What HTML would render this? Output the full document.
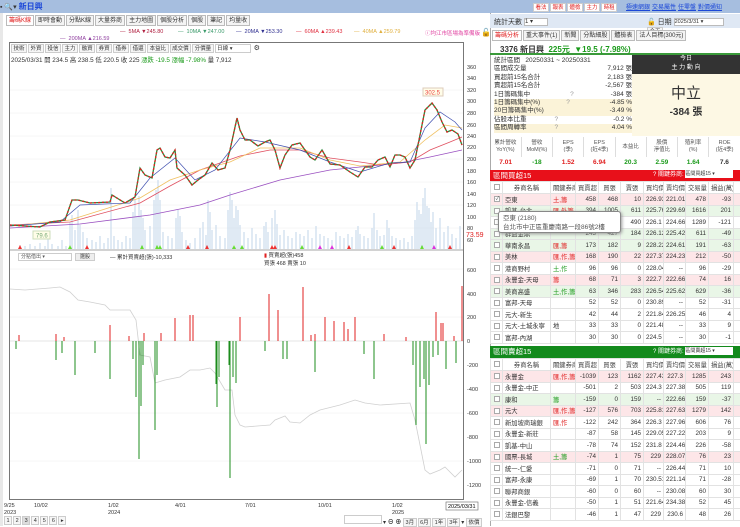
<!DOCTYPE html>
<html><head><meta charset="utf-8">
<style>
*{box-sizing:border-box;margin:0;padding:0}
body{width:740px;height:526px;overflow:hidden;background:#fff;font-family:"Liberation Sans","Noto Sans CJK TC",sans-serif;font-size:7px;color:#333;position:relative}
.abs{position:absolute}
.top{left:0;top:0;width:740px;height:13px;background:#a6bedf}
.tab{display:inline-block;border:1px solid #bbb;background:#f4f4f4;padding:0 2px;height:11px;line-height:10px;font-size:6px;margin-right:1px}
.btn{display:inline-block;border:1px solid #ccc;background:#f6f6f6;padding:0 1.5px;height:9px;line-height:8px;font-size:5.5px;margin-right:1px}
table{border-collapse:collapse;table-layout:fixed}
.t td{height:11.5px;border:1px solid #e2e2e2;font-size:6.3px;text-align:right;padding:0 2px;white-space:nowrap;overflow:hidden}
.t td.l{text-align:left}
.t tr.h td{text-align:center;background:#fff;height:12px;color:#444}
.t tr.p td{background:#fde6e8}
.t tr.g td{background:#e9f6e7}
.cb{display:inline-block;width:6px;height:6px;border:1px solid #aaa;background:#fff;vertical-align:middle}
.r{color:#e02020}.gr{color:#1a9a1a}
</style></head><body>
<div class="abs top"></div>
<div class="abs" style="left:0;top:1px;font-size:7px">▪ 🔍▾ <span style="color:#1b47d8;font-size:8px;font-weight:bold">新日興</span></div>
<div class="abs" style="left:533px;top:2px">
<span class="btn r" style="background:#fff">看法</span><span class="btn r" style="background:#fff">報表</span><span class="btn r" style="background:#fff">體檢</span><span class="btn r" style="background:#fff">主力</span><span class="btn r" style="background:#fff">時租</span>
<span style="color:#1b47d8;text-decoration:underline;font-size:6px;margin-left:6px">極速網銀</span> <span style="color:#1b47d8;text-decoration:underline;font-size:6px">交易屬性</span> <span style="color:#1b47d8;text-decoration:underline;font-size:6px">任零盤</span> <span style="color:#1b47d8;text-decoration:underline;font-size:6px">對價通知</span></div>

<!-- left tabs -->
<div class="abs" style="left:6px;top:15px"><span class="tab r" style="background:#fff">籌碼K線</span><span class="tab">即時會動</span><span class="tab">分點K線</span><span class="tab">大量券商</span><span class="tab">主力地圖</span><span class="tab">個股分析</span><span class="tab">個股</span><span class="tab">筆記</span><span class="tab">均量收</span></div>
<div class="abs" style="left:0;top:13px;width:3px;height:513px;background:#e8e8e8"></div>
<div class="abs" style="left:0;top:29px;width:740px;font-size:5.5px">
<span class="abs" style="left:120px;color:#b02040">— &nbsp;5MA ▼245.80</span>
<span class="abs" style="left:178px;color:#3a9a6a">— &nbsp;10MA ▼247.00</span>
<span class="abs" style="left:236px;color:#303090">— &nbsp;20MA ▼253.30</span>
<span class="abs" style="left:296px;color:#e03040">— &nbsp;60MA ▲239.43</span>
<span class="abs" style="left:354px;color:#e0b040">— &nbsp;40MA ▲259.79</span>
<span class="abs" style="left:425px;color:#e040a0">ⓘ均江市區場為準備版</span>
<span class="abs" style="left:60px;top:7px;color:#9040a0">— &nbsp;200MA ▲216.59</span></div>
<div class="abs" style="left:481px;top:28px;font-size:8px">🔓</div>

<!-- chart box -->
<div class="abs" style="left:9px;top:42px;width:455px;height:458px;border:1px solid #777"></div>
<div class="abs" style="left:11px;top:44px"><span class="btn">技術</span><span class="btn">外資</span><span class="btn">投信</span><span class="btn">主力</span><span class="btn">融資</span><span class="btn">券資</span><span class="btn">借券</span><span class="btn">借還</span><span class="btn">本益比</span><span class="btn">成交價</span><span class="btn">分價量</span><span class="btn" style="width:36px;background:#fff">日線 ▾</span> <span style="font-size:7px">⚙</span></div>
<div class="abs" style="left:11px;top:55px;font-size:6.3px">2025/03/31 開 234.5 高 238.5 低 220.5 收 225 <span class="gr">漲跌 -19.5 漲幅 -7.98%</span> 量 7,912</div>

<svg class="abs" style="left:0;top:0" width="740" height="526">
<g font-size="5.5" fill="#333" font-family="Liberation Sans">
<text x="467" y="69">360</text><text x="467" y="80">340</text><text x="467" y="92">320</text><text x="467" y="103">300</text><text x="467" y="115">280</text><text x="467" y="127">260</text><text x="467" y="138">240</text><text x="467" y="149">220</text><text x="467" y="161">200</text><text x="467" y="173">180</text><text x="467" y="184">160</text><text x="467" y="196">140</text><text x="467" y="207">120</text><text x="467" y="219">100</text><text x="467" y="230">80</text><text x="467" y="242">60</text>
<text x="466" y="237" fill="#e02020" font-size="7">73.59</text>
<text x="467" y="272">600</text><text x="467" y="296">400</text><text x="467" y="319">200</text><text x="467" y="343">0</text><text x="467" y="367">-200</text><text x="467" y="391">-400</text><text x="467" y="415">-600</text><text x="467" y="439">-800</text><text x="467" y="463">-1000</text><text x="467" y="487">-1200</text>
</g>
<g stroke="#eee" stroke-width="0.5"><line x1="10" y1="90" x2="463" y2="90"/><line x1="10" y1="113" x2="463" y2="113"/><line x1="10" y1="136" x2="463" y2="136"/><line x1="10" y1="159" x2="463" y2="159"/><line x1="10" y1="182" x2="463" y2="182"/><line x1="10" y1="205" x2="463" y2="205"/><line x1="10" y1="228" x2="463" y2="228"/>
<line x1="10" y1="269" x2="463" y2="269"/><line x1="10" y1="317" x2="463" y2="317"/><line x1="10" y1="413" x2="463" y2="413"/><line x1="10" y1="461" x2="463" y2="461"/></g>
<!-- volume -->
<path stroke="#c2d5ea" stroke-width="1" d="M20 249V245M25 249V246M30 249V244M35 249V246M40 249V243M45 249V246M48 249V238M52 249V244M58 249V246M62 249V240M66 249V246M70 249V222M72 249V215M75 249V230M78 249V210M80 249V225M83 249V232M87 249V238M92 249V240M96 249V242M100 249V236M104 249V243M108 249V238M111 249V188M114 249V236M118 249V240M122 249V242M126 249V236M130 249V238M133 249V212M135 249V200M137 249V216M139 249V196M141 249V210M143 249V218M145 249V230M150 249V226M154 249V200M156 249V190M158 249V180M160 249V200M163 249V232M168 249V236M172 249V238M176 249V218M178 249V210M180 249V216M182 249V232M186 249V240M190 249V243M195 249V238M200 249V228M203 249V222M206 249V235M208 249V200M210 249V212M212 249V230M216 249V225M220 249V236M225 249V238M228 249V210M230 249V192M232 249V200M234 249V218M236 249V206M238 249V210M240 249V225M244 249V232M248 249V238M252 249V228M256 249V234M260 249V238M264 249V226M266 249V222M268 249V232M272 249V218M275 249V210M277 249V224M280 249V235M284 249V230M288 249V236M292 249V238M296 249V232M300 249V234M304 249V236M308 249V230M312 249V238M316 249V226M320 249V234M324 249V236M328 249V238M332 249V240M336 249V232M340 249V236M344 249V238M348 249V234M352 249V237M356 249V230M358 249V226M360 249V234M364 249V236M368 249V238M372 249V228M374 249V213M377 249V230M380 249V236M384 249V235M387 249V220M389 249V228M392 249V236M396 249V238M400 249V240M404 249V238M408 249V242M412 249V236M415 249V220M417 249V202M419 249V210M421 249V214M423 249V198M425 249V188M427 249V206M429 249V208M431 249V222M433 249V212M436 249V228M440 249V218M444 249V232M448 249V226M452 249V234M456 249V238M460 249V226"/>
<g fill="#6d3" ><path d="M68 249l2-4 2 4zM140 249l2-4 2 4zM155 249l2-4 2 4zM158 249l2-4 2 4zM232 249l2-4 2 4zM240 249l2-4 2 4zM380 249l2-4 2 4zM420 249l2-4 2 4zM300 249l2-4 2 4z"/></g>
<g fill="#e33"><path d="M18 249l2-4 2 4zM85 249l2-4 2 4zM186 249l2-4 2 4zM205 249l2-4 2 4zM270 249l2-4 2 4zM273 249l2-4 2 4zM347 249l2-4 2 4zM392 249l2-4 2 4zM448 249l2-4 2 4z"/></g>
<g fill="#d3d"><path d="M318 249l2-4 2 4zM330 249l2-4 2 4zM432 249l2-4 2 4z"/></g>
<line x1="10" y1="250" x2="463" y2="250" stroke="#888" stroke-width="0.7"/>
<!-- MAs -->
<polyline fill="none" stroke="#9a50c0" stroke-width="0.8" points="10,228 80,224 150,215 200,205 230,195 280,180 330,170 360,167 400,163 430,157 462,150"/>
<polyline fill="none" stroke="#e05060" stroke-width="0.8" points="10,225 70,222 140,203 170,186 200,170 240,156 270,150 300,150 330,158 360,162 380,165 410,162 430,150 450,142 462,137"/>
<polyline fill="none" stroke="#f0c060" stroke-width="0.8" points="10,226 70,220 140,198 170,180 200,170 230,162 260,148 300,148 330,160 360,166 400,162 425,140 445,125 462,128"/>
<polyline fill="none" stroke="#4050b0" stroke-width="0.7" points="10,226 60,222 80,205 130,203 150,178 175,158 195,180 215,170 240,138 265,142 300,150 330,162 360,172 390,163 410,162 425,128 440,112 455,122 462,130"/>
<polyline fill="none" stroke="#2a8a3a" stroke-width="1.3" points="10,225 40,227 50,222 65,220 72,200 78,200 90,203 110,202 112,195 125,203 135,197 140,168 145,175 152,178 157,150 160,148 165,157 170,158 175,150 177,168 185,175 192,185 198,180 205,175 212,163 218,170 225,168 230,150 237,118 240,130 245,140 250,140 258,146 265,142 270,140 275,150 280,168 285,155 292,145 300,143 305,150 310,157 315,160 322,150 330,164 340,165 350,172 358,177 365,167 372,167 378,160 385,157 390,167 395,155 400,155 405,157 410,168 415,160 418,145 425,110 432,103 437,110 442,122 447,132 452,130 458,134 462,145"/>
<polyline fill="none" stroke="#e02020" stroke-width="1.3" stroke-dasharray="2 2" points="10,225 40,227 50,222 65,220 72,200 78,200 90,203 110,202 112,195 125,203 135,197 140,168 145,175 152,178 157,150 160,148 165,157 170,158 175,150 177,168 185,175 192,185 198,180 205,175 212,163 218,170 225,168 230,150 237,118 240,130 245,140 250,140 258,146 265,142 270,140 275,150 280,168 285,155 292,145 300,143 305,150 310,157 315,160 322,150 330,164 340,165 350,172 358,177 365,167 372,167 378,160 385,157 390,167 395,155 400,155 405,157 410,168 415,160 418,145 425,110 432,103 437,110 442,122 447,132 452,130 458,134 462,145"/>
<rect x="33" y="231" width="17" height="8" fill="#fffde8" stroke="#cdb"/><text x="36" y="237.5" font-size="6" fill="#7a7">79.6</text>
<rect x="423" y="88" width="20" height="8" fill="#fffde8" stroke="#dcb"/><text x="425" y="94.5" font-size="6" fill="#e44">302.5</text>
<!-- lower -->
<line x1="10" y1="341" x2="463" y2="341" stroke="#ccc" stroke-width="0.5"/>
<polyline fill="none" stroke="#d0d0d0" stroke-width="0.8" points="10,289 25,290 50,288 60,287 70,292 78,300 90,302 105,305 110,310 130,310 136,320 140,355 150,357 155,383 165,380 180,377 190,370 200,370 210,368 215,373 225,390 232,390 235,415 240,425 245,427 270,425 275,420 285,416 290,422 300,423 310,415 320,410 340,405 355,400 365,403 380,405 410,403 415,420 425,470 430,474 440,470 445,467 455,477 462,470"/>
<path stroke="#e02020" stroke-width="1" d="M19 341V335M56 341V334M64 341V337M110 341V325M129 341V336M144 341V333M161 341V333M175 341V318M190 341V315M193 341V315M240 341V317M269 341V294M278 341V310M303 341V287M311 341V335M315 341V334M325 341V317M334 341V321M344 341V322M348 341V329M355 341V317M384 341V334M406 341V337M436 341V312M441 341V323M443 341V323M454 341V336M462 341V286"/>
<path stroke="#1c8c1c" stroke-width="1" d="M16 341V349M56 341V360M62 341V353M75 341V375M95 341V353M110 341V379M133 341V359M136 341V397M139 341V459M141 341V406M143 341V365M155 341V430M157 341V375M216 341V384M217 341V407M219 341V377M229 341V365M230 341V478M233 341V377M236 341V383M265 341V351M283 341V359M287 341V359M315 341V372M364 341V354M374 341V379M413 341V365M416 341V425M420 341V387M424 341V379M426 341V444M429 341V385M433 341V357M438 341V355M446 341V369M456 341V363"/>
<g font-size="5.5" fill="#333">
<text x="4" y="507">9/25</text><text x="4" y="514">2023</text><text x="34" y="507">10/02</text><text x="108" y="507">1/02</text><text x="108" y="514">2024</text><text x="175" y="507">4/01</text><text x="245" y="507">7/01</text><text x="318" y="507">10/01</text><text x="392" y="507">1/02</text><text x="392" y="514">2025</text>
</g>
<rect x="446" y="502" width="32" height="8" fill="#fff" stroke="#666" stroke-width="0.6"/><text x="448" y="508" font-size="5.5">2025/03/31</text>
</svg>
<div class="abs" style="left:18px;top:253px;width:54px;height:8px;border:1px solid #ccc;font-size:5px;line-height:7px;padding-left:2px;color:#555">分點借出 ▾</div>
<div class="abs" style="left:75px;top:253px;width:20px;height:8px;border:1px solid #ccc;background:#eee;font-size:5px;line-height:7px;text-align:center">選股</div>
<div class="abs" style="left:110px;top:253px;font-size:5.5px">— 累計買賣超(張)-10,333</div>
<div class="abs" style="left:264px;top:252px;font-size:5.5px;line-height:8px"><span class="r">▮</span> 買賣超(張)458<br>買張 468 賣張 10</div>
<div class="abs" style="left:4px;top:516px;font-size:6px"><span class="btn">1</span><span class="btn">2</span><span class="btn" style="background:#ddd">3</span><span class="btn">4</span><span class="btn">5</span><span class="btn">6</span><span class="btn">▸</span></div>
<div class="abs" style="left:344px;top:515px;font-size:6px"><span class="btn" style="width:38px;background:#fff"> </span>▾ <b>⊖ ⊕</b> <span class="btn">3月</span><span class="btn">6月</span><span class="btn">1年</span><span class="btn">3年</span>▾ <span class="btn">依價</span></div>

<!-- right panel -->
<div class="abs" style="left:490px;top:13px;width:250px;height:513px;border-left:1px solid #aaa"></div>
<div class="abs" style="left:490px;top:14px;width:250px;height:14px;background:#dfe8f4"></div>
<div class="abs" style="left:494px;top:17px;font-size:7px">統計天數 <span style="display:inline-block;width:24px;height:8px;border:1px solid #bbb;background:#fff;font-size:6px;line-height:7px;vertical-align:middle">1 ▾</span></div>
<div class="abs" style="left:647px;top:17px;font-size:7px">🔓 日期 <span style="display:inline-block;width:50px;height:8px;border:1px solid #bbb;background:#fff;font-size:5.5px;line-height:7px;vertical-align:middle">2025/3/31 ▾</span> <span class="btn">今天</span></div>
<div class="abs" style="left:492px;top:30px"><span class="tab r" style="background:#fff">籌碼分析</span><span class="tab">重大事件(1)</span><span class="tab">新聞</span><span class="tab">分點細股</span><span class="tab">體檢表</span><span class="tab">法人目標(300元)</span></div>
<div class="abs" style="left:490px;top:42px;width:250px;height:13px;border-bottom:2px solid #3a9a3a"></div>
<div class="abs" style="left:500px;top:44px;font-size:8px;font-weight:bold">3376 新日興 &nbsp;<span class="gr">225元 &nbsp;▼19.5 (-7.98%)</span></div>
<div class="abs" style="left:494px;top:57px;width:138px;font-size:6.5px;line-height:8.4px">
<div>統計區間 &nbsp; 20250331 ~ 20250331</div>
<div>區間成交量<span style="float:right">7,912 張</span></div>
<div>買超前15名合計<span style="float:right">2,183 張</span></div>
<div>賣超前15名合計<span style="float:right">-2,567 張</span></div>
<div>1日籌碼集中<span style="margin-left:40px;color:#999">?</span><span style="float:right">-384 張</span></div>
<div style="background:#fbf3d8">1日籌碼集中(%)<span style="margin-left:26px;color:#999">?</span><span style="float:right">-4.85 %</span></div>
<div style="background:#fbf3d8">20日籌碼集中(%)<span style="float:right">-3.49 %</span></div>
<div>佔股本比重<span style="margin-left:28px;color:#999">?</span><span style="float:right">-0.2 %</span></div>
<div style="background:#fbf3d8">區間周轉率<span style="margin-left:28px;color:#999">?</span><span style="float:right">4.04 %</span></div>
</div>
<div class="abs" style="left:632px;top:55px;width:108px;height:19px;background:#333;color:#fff;text-align:center;font-size:6px;line-height:9px">今日<br>主 力 動 向</div>
<div class="abs" style="left:632px;top:74px;width:108px;height:62px;background:#fdf8e4;text-align:center"><div style="font-size:15px;margin-top:8px;color:#333">中立</div><div style="font-size:10px;font-weight:bold">-384 張</div></div>
<table class="abs" style="left:490px;top:137px;width:250px;font-size:5.5px;text-align:center"><tr style="height:20px;color:#555;line-height:7px">
<td style="border-right:1px solid #ddd">累計營收<br>YoY(%)</td><td style="border-right:1px solid #ddd">營收<br>MoM(%)</td><td style="border-right:1px solid #ddd">EPS<br>(季)</td><td style="border-right:1px solid #ddd">EPS<br>(近4季)</td><td style="border-right:1px solid #ddd">本益比</td><td style="border-right:1px solid #ddd">股價<br>淨值比</td><td style="border-right:1px solid #ddd">殖利率<br>(%)</td><td>ROE<br>(近4季)</td></tr>
<tr style="height:11px;font-weight:bold;font-size:6.5px"><td class="r">7.01</td><td class="gr">-18</td><td class="r">1.52</td><td class="r">6.94</td><td class="gr">20.3</td><td class="gr">2.59</td><td class="gr">1.64</td><td>7.6</td></tr></table>
<div class="abs" style="left:490px;top:170px;width:250px;height:11px;background:#e8101a;color:#fff;font-size:7.5px;line-height:11px;padding-left:3px">區間買超15<span style="position:absolute;left:163px;font-size:6px">? 關鍵券商: <span style="display:inline-block;width:48px;height:8px;background:#fff;color:#333;font-size:5px;line-height:8px;vertical-align:middle">區間買超15 ▾</span></span></div>
<table class="abs t" style="left:490px;top:181px;width:250px">
<colgroup><col style="width:12px"><col style="width:48px"><col style="width:25px"><col style="width:23px"><col style="width:22px"><col style="width:23px"><col style="width:20px"><col style="width:22px"><col style="width:23px"><col style="width:25px"><col style="width:7px"></colgroup>
<tr class="h"><td><span class="cb"></span></td><td>券商名稱</td><td>關鍵券商</td><td>買賣超</td><td>買張</td><td>賣張</td><td>買均價</td><td>賣均價</td><td>交易量</td><td>損益(萬)</td><td></td></tr>
<tr class="p"><td><span class="cb" style="font-size:5px;line-height:4px">✓</span></td><td class="l">亞東</td><td class="l r">土,籌</td><td>458</td><td>468</td><td>10</td><td>226.93</td><td>221.01</td><td>478</td><td>-93</td><td></td></tr>
<tr class="g"><td><span class="cb"></span></td><td class="l">凱基-台北</td><td class="l r">匯,外籌</td><td>394</td><td>1005</td><td>611</td><td>225.76</td><td>229.69</td><td>1616</td><td>201</td><td></td></tr>
<tr><td><span class="cb"></span></td><td class="l">元大</td><td></td><td>309</td><td>799</td><td>490</td><td>226.1</td><td>224.66</td><td>1289</td><td>-121</td><td></td></tr>
<tr class="g"><td><span class="cb"></span></td><td class="l">群益金鼎</td><td></td><td>243</td><td>427</td><td>184</td><td>226.12</td><td>225.42</td><td>611</td><td>-49</td><td></td></tr>
<tr class="g"><td><span class="cb"></span></td><td class="l">華南永昌</td><td class="l r">匯,籌</td><td>173</td><td>182</td><td>9</td><td>228.22</td><td>224.61</td><td>191</td><td>-63</td><td></td></tr>
<tr class="p"><td><span class="cb"></span></td><td class="l">美林</td><td class="l r">匯,作,籌</td><td>168</td><td>190</td><td>22</td><td>227.37</td><td>224.23</td><td>212</td><td>-50</td><td></td></tr>
<tr><td><span class="cb"></span></td><td class="l">港商野村</td><td class="l gr">土,作</td><td>96</td><td>96</td><td>0</td><td>228.04</td><td>--</td><td>96</td><td>-29</td><td></td></tr>
<tr class="p"><td><span class="cb"></span></td><td class="l">永豐金-天母</td><td class="l r">籌</td><td>68</td><td>71</td><td>3</td><td>222.7</td><td>222.66</td><td>74</td><td>16</td><td></td></tr>
<tr class="g"><td><span class="cb"></span></td><td class="l">美商高盛</td><td class="l gr">土,作,籌</td><td>63</td><td>346</td><td>283</td><td>226.54</td><td>225.62</td><td>629</td><td>-36</td><td></td></tr>
<tr><td><span class="cb"></span></td><td class="l">富邦-天母</td><td></td><td>52</td><td>52</td><td>0</td><td>230.89</td><td>--</td><td>52</td><td>-31</td><td></td></tr>
<tr><td><span class="cb"></span></td><td class="l">元大-新生</td><td></td><td>42</td><td>44</td><td>2</td><td>221.84</td><td>226.25</td><td>46</td><td>4</td><td></td></tr>
<tr><td><span class="cb"></span></td><td class="l">元大-土城永寧</td><td class="l">地</td><td>33</td><td>33</td><td>0</td><td>221.48</td><td>--</td><td>33</td><td>9</td><td></td></tr>
<tr><td><span class="cb"></span></td><td class="l">富邦-內湖</td><td></td><td>30</td><td>30</td><td>0</td><td>224.5</td><td>--</td><td>30</td><td>-1</td><td></td></tr>
</table>
<div class="abs" style="left:498px;top:211px;width:123px;height:22px;background:#fff;border:1px solid #888;border-radius:3px;box-shadow:1px 1px 3px #999;font-size:6.5px;line-height:9px;padding:2px 4px;color:#555">亞東 (2180)<br>台北市中正區重慶南路一段86號2樓</div>
<div class="abs" style="left:490px;top:346px;width:250px;height:12px;background:#138a1c;color:#fff;font-size:7.5px;line-height:12px;padding-left:3px">區間賣超15<span style="position:absolute;left:163px;font-size:6px">? 關鍵券商: <span style="display:inline-block;width:48px;height:8px;background:#fff;color:#333;font-size:5px;line-height:8px;vertical-align:middle">區間賣超15 ▾</span></span></div>
<table class="abs t" style="left:490px;top:358px;width:250px">
<colgroup><col style="width:12px"><col style="width:48px"><col style="width:25px"><col style="width:23px"><col style="width:22px"><col style="width:23px"><col style="width:20px"><col style="width:22px"><col style="width:23px"><col style="width:25px"><col style="width:7px"></colgroup>
<tr class="h"><td><span class="cb"></span></td><td>券商名稱</td><td>關鍵券商</td><td>買賣超</td><td>買張</td><td>賣張</td><td>買均價</td><td>賣均價</td><td>交易量</td><td>損益(萬)</td><td></td></tr>
<tr class="p"><td><span class="cb"></span></td><td class="l">永豐金</td><td class="l r">匯,作,籌</td><td>-1039</td><td>123</td><td>1162</td><td>227.43</td><td>227.3</td><td>1285</td><td>243</td><td></td></tr>
<tr><td><span class="cb"></span></td><td class="l">永豐金-中正</td><td></td><td>-501</td><td>2</td><td>503</td><td>224.3</td><td>227.38</td><td>505</td><td>119</td><td></td></tr>
<tr class="g"><td><span class="cb"></span></td><td class="l">康和</td><td class="l gr">籌</td><td>-159</td><td>0</td><td>159</td><td>--</td><td>222.66</td><td>159</td><td>-37</td><td></td></tr>
<tr class="p"><td><span class="cb"></span></td><td class="l">元大</td><td class="l r">匯,作,籌</td><td>-127</td><td>576</td><td>703</td><td>225.81</td><td>227.63</td><td>1279</td><td>142</td><td></td></tr>
<tr><td><span class="cb"></span></td><td class="l">新加坡商瑞銀</td><td class="l r">匯,作</td><td>-122</td><td>242</td><td>364</td><td>226.3</td><td>227.96</td><td>606</td><td>76</td><td></td></tr>
<tr><td><span class="cb"></span></td><td class="l">永豐金-新莊</td><td></td><td>-87</td><td>58</td><td>145</td><td>229.05</td><td>227.22</td><td>203</td><td>9</td><td></td></tr>
<tr><td><span class="cb"></span></td><td class="l">凱基-中山</td><td></td><td>-78</td><td>74</td><td>152</td><td>231.8</td><td>224.46</td><td>226</td><td>-58</td><td></td></tr>
<tr class="p"><td><span class="cb"></span></td><td class="l">國票-長城</td><td class="l gr">土,籌</td><td>-74</td><td>1</td><td>75</td><td>229</td><td>228.07</td><td>76</td><td>23</td><td></td></tr>
<tr><td><span class="cb"></span></td><td class="l">統一-仁愛</td><td></td><td>-71</td><td>0</td><td>71</td><td>--</td><td>226.44</td><td>71</td><td>10</td><td></td></tr>
<tr><td><span class="cb"></span></td><td class="l">富邦-永康</td><td></td><td>-69</td><td>1</td><td>70</td><td>230.51</td><td>221.14</td><td>71</td><td>-28</td><td></td></tr>
<tr><td><span class="cb"></span></td><td class="l">聯邦商銀</td><td></td><td>-60</td><td>0</td><td>60</td><td>--</td><td>230.08</td><td>60</td><td>30</td><td></td></tr>
<tr><td><span class="cb"></span></td><td class="l">永豐金-信義</td><td></td><td>-50</td><td>1</td><td>51</td><td>221.64</td><td>234.38</td><td>52</td><td>45</td><td></td></tr>
<tr><td><span class="cb"></span></td><td class="l">法銀巴黎</td><td></td><td>-46</td><td>1</td><td>47</td><td>229</td><td>230.6</td><td>48</td><td>26</td><td></td></tr>
</table>
</body></html>
